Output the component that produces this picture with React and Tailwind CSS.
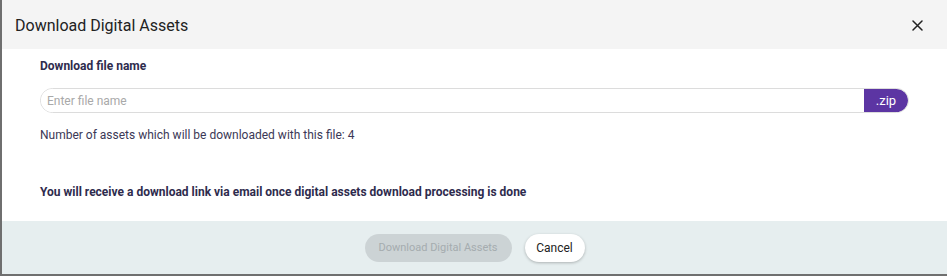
export default function App() {
  return (
    <div className="w-[947px] h-[276px] bg-[#6f6f6f] flex flex-col pl-[2px] pb-[2px] overflow-hidden" style={{ fontFamily: 'Roboto, "Liberation Sans", sans-serif' }}>
      <div className="flex-1 flex flex-col bg-white">
        <div className="h-[49px] bg-[#f4f4f4] flex items-center justify-between pl-[13px] pr-[24px]">
          <h1 className="text-[16px] text-[#222] leading-none mt-[2px]">Download Digital Assets</h1>
          <svg width="11" height="11" viewBox="0 0 11 11" className="mt-[1px]">
            <path d="M1 1 L10 10 M10 1 L1 10" stroke="#222" strokeWidth="1.5" strokeLinecap="round" />
          </svg>
        </div>
        <div className="flex-1 flex flex-col pl-[38px] pr-[38px] pt-[9px]">
          <div className="text-[12px] font-bold text-[#2e2b4d] leading-[16px]">Download file name</div>
          <div className="mt-[14px] h-[25px] flex rounded-full border border-[#dcdcdc] overflow-hidden">
            <input placeholder="Enter file name" className="flex-1 min-w-0 px-[6px] text-[12px] text-[#333] placeholder-[#a9a9a9] outline-none bg-white" />
            <div className="w-[44px] bg-[#5c35a3] text-white text-[13px] flex items-center justify-center rounded-r-full">.zip</div>
          </div>
          <div className="mt-[14px] text-[12px] text-[#3b3856] leading-[16px]">Number of assets which will be downloaded with this file: 4</div>
          <div className="mt-[41px] text-[12px] font-bold text-[#2e2b4d] leading-[16px]">You will receive a download link via email once digital assets download processing is done</div>
        </div>
        <div className="h-[53px] bg-[#e6eeef] flex items-center justify-center gap-[13px] pt-[1px]">
          <button className="h-[28px] w-[147px] rounded-full bg-[#ccd3d5] text-[#a5acaf] text-[11px]">Download Digital Assets</button>
          <button className="h-[28px] w-[60px] rounded-full bg-white text-[#222] text-[12px] shadow-[0_1px_3px_rgba(0,0,0,0.25)]">Cancel</button>
        </div>
      </div>
    </div>
  );
}
